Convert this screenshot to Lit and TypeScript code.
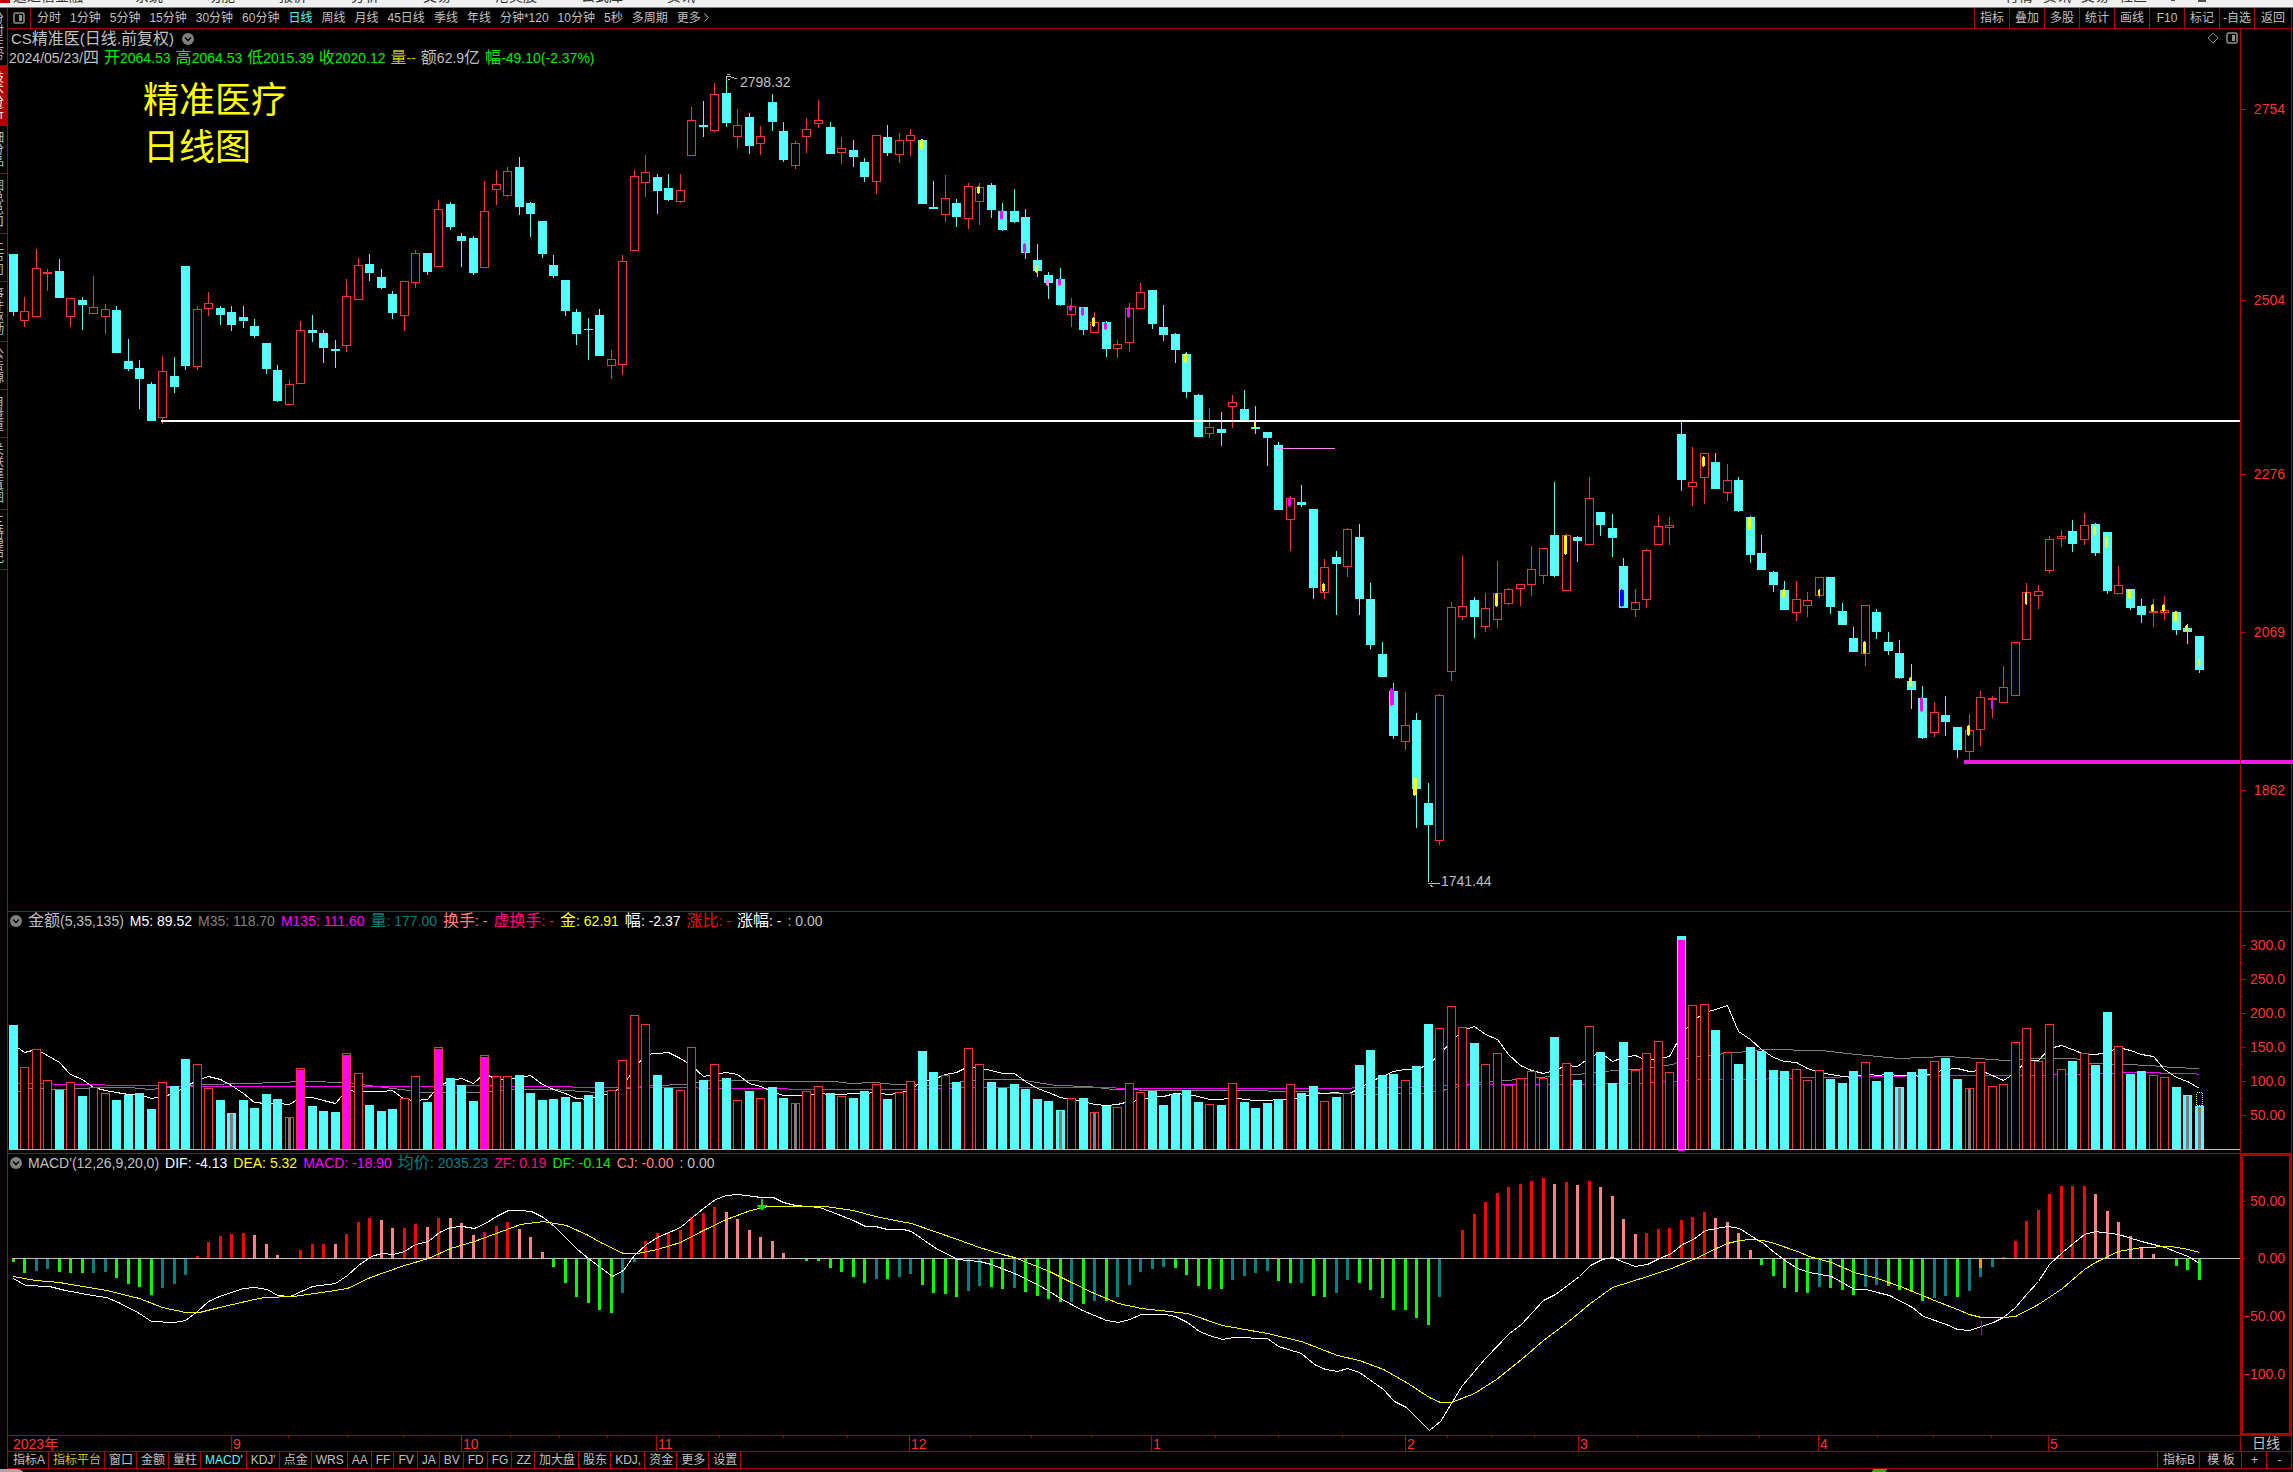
import { LitElement, html, css, svg } from "lit";
import { customElement, property, state } from "lit/decorators.js";
import { classMap } from "lit/directives/class-map.js";

/* ---------- Series data, in canvas units ---------- */

const cx = (i: number) => Math.floor(13.15 + 11.505 * i);

// direction (r = rising, c = falling), high, body top, body bottom, low
const CANDLES = `
c254,254,312,316 r297,311,321,327 r249,268,317,317 r269,272,274,291 c259,271,298,298 r298,298,317,327 c297,300,305,330 r276,307,314,314 r304,309,317,334 c306,310,353,353
c339,361,369,371 c360,368,379,409 c382,384,421,421 r356,371,418,424 c357,376,387,393 c266,266,366,370 r306,309,367,370 r292,303,309,316 c306,308,315,325 c306,312,325,331
c306,317,321,328 c319,326,336,338 c343,343,369,374 c365,370,401,402 r380,384,405,405 r321,330,384,384 c315,330,333,342 c330,333,348,363 c340,349,351,368 r279,296,346,352
r258,265,300,300 c254,264,273,281 c269,277,288,289 c291,294,313,319 r281,281,316,331 r250,253,283,288 c253,253,272,275 r200,209,267,267 c202,204,227,230 c233,236,241,267
c236,238,273,275 r181,211,268,268 r170,184,190,205 r167,171,196,197 c157,167,207,215 c202,203,214,237 c221,221,254,258 c255,265,276,278 c280,280,311,316 c309,312,334,345
c318,329,330,360 c309,315,356,356 r350,359,366,379 r255,261,365,375 r170,176,251,251 r155,172,183,197 c174,177,191,214 c174,188,200,201 r174,190,202,203 r107,120,156,156
c101,125,127,137 r83,94,131,132 c76,93,123,127 r109,125,137,148 c113,117,146,154 r126,136,144,155 c94,102,122,131 c122,131,160,162 r141,143,166,169 r118,129,137,153
r100,120,124,128 c122,127,154,154 r137,148,153,164 c140,150,157,167 c158,162,177,182 r135,135,182,194 c125,137,153,156 r133,140,155,163 r129,135,141,156 c139,140,204,204
c181,207,209,209 r175,198,215,222 c199,203,217,227 r183,186,219,229 r183,187,202,225 c183,185,210,218 c203,211,230,231 c189,211,222,223 c209,217,253,259 c244,260,271,277
c272,275,283,299 c268,279,305,306 r298,306,315,327 c307,307,330,335 r312,322,333,333 c321,322,349,357 r340,344,349,358 r303,308,343,352 r283,292,309,309 c290,290,324,329
c305,327,335,341 c333,334,350,363 c352,354,392,398 c394,395,437,437 r408,427,434,438 c412,429,433,446 r395,402,407,428 c390,409,421,421 c406,427,429,434 c432,432,438,466
c442,445,510,510 r496,498,520,551 c485,502,505,507 c509,509,588,599 r559,567,593,599 c551,557,564,615 r528,529,567,577 c524,537,599,615 c583,599,645,649 c642,654,677,677
c683,691,736,739 r692,725,742,750 c713,720,789,828 c783,803,825,882 r694,695,841,845 r602,607,672,681 r556,606,617,620 c597,600,617,638 r593,608,627,632 r561,593,620,628
r588,589,604,605 r584,584,589,606 r546,569,585,596 r548,548,576,584 c482,535,576,577 r534,535,591,591 c536,537,541,562 r477,498,545,545 c512,512,525,536 c514,528,538,557
c558,566,608,608 r589,602,610,617 r549,550,600,608 r515,526,545,545 r517,525,528,545 c422,434,480,491 r447,482,487,506 r453,453,478,504 c453,462,489,489 r464,480,493,501
c477,480,511,512 c516,517,555,563 c535,553,570,570 c571,572,585,592 c581,590,610,610 r581,599,613,621 r592,600,606,617 r577,577,596,598 c577,577,607,614 c603,611,625,625
c627,638,652,652 r605,605,654,666 c609,612,632,639 c632,642,651,655 c640,653,678,679 c664,681,690,709 c686,698,738,739 r702,712,733,737 c696,715,722,736 c727,727,750,758
r714,730,752,760 r691,697,730,746 r696,698,700,718 r666,687,703,703 r642,642,696,696 r583,592,640,640 r585,591,596,609 r536,539,571,573 r530,536,539,547 c520,531,544,552
r513,525,540,545 c523,524,553,556 c532,532,591,594 r566,585,594,594 c589,589,608,610 c599,606,615,623 r599,611,613,627 r596,610,613,620 c611,612,630,635 c624,628,632,644
c636,636,670,673`
  .trim()
  .split(/\s+/)
  .map((s) => {
    const [h, t, b, l] = s.slice(1).split(",").map(Number);
    return { up: s[0] === "r", h, t, b, l };
  });

// candle index, tone, top, bottom, width
const SIGNALS: [number, string, number, number, number][] = [
  [79, "y", 139, 150, 3], [84, "y", 186, 194, 3], [86, "m", 210, 220, 3], [88, "m", 243, 253, 3],
  [89, "y", 265, 273, 3], [90, "p", 279, 286, 3], [91, "m", 278, 286, 3], [92, "m", 305, 311, 3],
  [93, "m", 307, 316, 3], [94, "y", 317, 327, 3], [95, "m", 322, 330, 3], [97, "m", 307, 318, 3],
  [102, "y", 353, 363, 3], [108, "y", 421, 429, 2], [111, "m", 497, 507, 3], [114, "y", 583, 592, 3],
  [120, "m", 688, 706, 4], [122, "y", 777, 796, 4], [129, "y", 593, 607, 3], [135, "y", 535, 555, 3],
  [140, "b", 589, 607, 4], [147, "y", 456, 467, 3], [151, "y", 517, 530, 3], [154, "y", 589, 598, 3],
  [157, "y", 589, 596, 2], [161, "y", 641, 654, 3], [165, "y", 677, 687, 3], [166, "m", 697, 712, 3],
  [170, "y", 725, 736, 3], [172, "m", 699, 710, 2], [175, "y", 592, 605, 2], [181, "y", 526, 536, 3],
  [182, "y", 536, 548, 3], [184, "y", 589, 599, 3], [186, "y", 604, 612, 3], [187, "y", 604, 612, 3],
  [188, "y", 611, 622, 3], [189, "y", 625, 631, 3], [190, "y", 659, 666, 2],
];

const VOLUME_BASE = 1149;
const VOLUME = [
  1025, 1067, 1049, 1080, 1090, 1082, 1096, 1087, 1093, 1100, 1095, 1093, 1109, 1082, 1086, 1059, 1064, 1088, 1100, 1113,
  1100, 1108, 1094, 1099, 1117, 1068, 1106, 1111, 1112, 1053, 1073, 1105, 1111, 1109, 1098, 1076, 1102, 1047, 1078, 1085,
  1101, 1055, 1076, 1076, 1075, 1093, 1100, 1099, 1097, 1102, 1095, 1082, 1090, 1060, 1015, 1024, 1075, 1088, 1090, 1047,
  1080, 1064, 1078, 1100, 1091, 1098, 1087, 1098, 1103, 1091, 1086, 1093, 1096, 1098, 1091, 1084, 1099, 1092, 1081, 1051,
  1072, 1075, 1082, 1048, 1064, 1082, 1088, 1084, 1089, 1099, 1101, 1110, 1098, 1098, 1112, 1106, 1107, 1083, 1092, 1091,
  1105, 1094, 1090, 1102, 1104, 1105, 1083, 1102, 1108, 1103, 1099, 1084, 1093, 1086, 1101, 1097, 1093, 1065, 1050, 1075,
  1074, 1080, 1066, 1024, 1028, 1006, 1027, 1043, 1064, 1053, 1085, 1078, 1071, 1078, 1037, 1063, 1080, 1026, 1052, 1083,
  1042, 1070, 1053, 1041, 1072, 936, 1005, 1004, 1030, 1052, 1064, 1047, 1051, 1070, 1071, 1069, 1080, 1070, 1079, 1083,
  1071, 1062, 1081, 1072, 1087, 1072, 1069, 1061, 1058, 1079, 1088, 1062, 1086, 1084, 1042, 1028, 1061, 1024, 1069, 1061,
  1053, 1065, 1012, 1046, 1074, 1071, 1075, 1077, 1087, 1095, 1106,
];
const QUIET = new Set([19, 24, 68, 91, 94, 164, 170, 189, 190]);
const SURGE = new Set([25, 29, 37, 41, 145]);

const M5 = VOLUME.map((_, i) =>
  i < 4 ? [1044, 1052, 1049, 1055][i] : Math.round((VOLUME[i] + VOLUME[i - 1] + VOLUME[i - 2] + VOLUME[i - 3] + VOLUME[i - 4]) / 5)
);
const M5_POINTS = M5.map((y, i) => `${cx(i)},${y}`).join(" ");
const M35_POINTS =
  "15,1092 30,1088 65,1089 100,1087 129,1087 149,1089 172,1087 199,1084 249,1083 303,1081 348,1082 368,1085 393,1088 423,1092 478,1092 497,1090 522,1089 552,1089 597,1092 627,1088 652,1085 686,1084 711,1080 736,1080 780,1081 835,1081 850,1083 874,1082 894,1084 942,1085 962,1081 984,1079 1019,1079 1036,1082 1056,1085 1088,1086 1113,1089 1163,1090 1248,1090 1287,1091 1312,1091 1322,1093 1372,1094 1422,1093 1442,1090 1459,1086 1481,1082 1506,1080 1538,1077 1563,1075 1578,1074 1600,1071 1637,1069 1672,1064 1687,1058 1705,1055 1737,1052 1762,1049 1821,1050 1856,1054 1899,1058 1946,1056 1978,1058 2005,1060 2033,1058 2075,1058 2090,1063 2125,1064 2150,1065 2172,1067 2199,1068";
const M135_POINTS =
  "15,1083 90,1084 119,1085 209,1086 438,1086 448,1085 532,1086 612,1087 780,1088 795,1089 909,1089 934,1088 984,1087 1108,1087 1123,1088 1337,1088 1367,1087 1407,1087 1437,1085 1466,1084 1573,1084 1632,1083 1672,1081 1697,1079 1752,1079 1811,1077 1871,1076 1941,1075 2010,1075 2080,1074 2125,1072 2194,1073 2199,1074";

const ZERO = 1258;
// R strengthening, P fading, G weakening, T recovering
const MACD = `
G-4 G-15 T-13 T-11 G-14 G-15 G-15 T-15 T-14 G-20 G-26 G-29 G-37 T-30 T-26 T-17 R2 R16 R22 R24
R25 P23 P14 P3 G-1 R8 R14 R14 P14 R24 R36 R40 P38 P30 R30 R34 P31 R40 P40 P35
P23 R26 R32 R36 P29 P21 P6 G-9 G-25 G-39 G-45 G-52 G-55 T-35 T-4 R17 R25 R26 R28 R41
R45 R51 P46 P39 P28 P21 P17 P5 R0 G-3 G-3 G-10 G-14 G-19 G-25 T-21 G-21 T-19 T-16 G-27
G-35 G-36 G-39 T-33 T-28 G-29 G-31 T-30 G-34 G-38 G-41 G-44 T-44 G-46 T-43 G-43 T-39 T-27 T-14 T-11
T-9 G-10 G-17 G-28 G-31 G-31 T-22 T-18 T-15 T-13 G-23 G-25 T-25 G-38 G-39 T-35 T-22 G-25 G-32 G-40
G-52 G-52 G-60 G-67 T-39 R0 R28 R44 R56 R65 R71 R74 R77 R80 P74 R76 P73 R77 P71 P62
P39 P24 R25 R29 R30 R38 R41 R46 P40 P36 P25 P8 G-7 G-18 G-30 G-34 G-35 T-29 G-30 G-32
G-37 T-29 T-27 G-28 G-32 G-34 G-43 T-40 T-38 G-39 T-33 T-19 T-9 R1 R17 R37 R48 R64 R72 R72
R72 P64 P47 P36 P22 P11 P4 G-1 G-8 G-12 G-22`
  .trim()
  .split(/\s+/)
  .map((s) => ({ tone: s[0], v: Number(s.slice(1)) }));
const DIF_POINTS =
  "13,1278 25,1285 49,1286 65,1290 92,1295 106,1297 118,1302 139,1313 151,1321 174,1322 185,1320 197,1311 208,1301 219,1296 243,1288 254,1287 267,1289 277,1295 290,1296 301,1291 312,1286 335,1283 347,1275 358,1265 371,1256 381,1253 393,1254 404,1251 415,1244 428,1241 439,1232 450,1227 462,1226 474,1228 485,1223 496,1216 508,1210 520,1210 531,1211 543,1217 555,1227 577,1249 588,1258 600,1267 612,1276 623,1270 634,1255 646,1244 657,1237 680,1227 692,1217 703,1208 715,1199 726,1195 737,1194 761,1197 773,1197 783,1202 795,1205 819,1207 830,1211 853,1220 865,1226 875,1226 887,1229 903,1229 911,1231 934,1247 957,1259 979,1261 991,1264 1014,1273 1037,1284 1049,1291 1060,1298 1082,1310 1106,1320 1118,1322 1129,1319 1141,1314 1165,1314 1175,1316 1187,1322 1199,1331 1209,1335 1222,1339 1233,1337 1267,1338 1278,1346 1301,1353 1314,1364 1325,1369 1337,1371 1347,1368 1359,1372 1383,1389 1394,1401 1406,1407 1429,1430 1440,1421 1451,1403 1462,1385 1485,1358 1509,1333 1521,1324 1532,1312 1543,1300 1555,1294 1567,1285 1579,1276 1590,1265 1602,1259 1612,1257 1624,1262 1635,1266 1647,1264 1659,1258 1671,1253 1682,1244 1693,1239 1705,1230 1716,1228 1727,1226 1739,1228 1750,1235 1763,1243 1774,1252 1786,1261 1797,1268 1809,1272 1831,1276 1854,1289 1866,1289 1877,1292 1889,1295 1912,1307 1923,1316 1946,1324 1957,1329 1969,1330 1981,1326 1993,1322 2003,1317 2015,1307 2027,1293 2038,1281 2049,1264 2062,1252 2073,1243 2084,1234 2095,1231 2118,1234 2141,1241 2165,1247 2177,1252 2188,1256 2199,1263";
const DEA_POINTS =
  "13,1276 35,1280 59,1282 106,1290 139,1298 162,1307 185,1312 199,1312 219,1307 254,1299 264,1297 293,1296 335,1290 347,1288 370,1277 404,1265 428,1258 450,1248 474,1241 520,1224 543,1221 566,1225 588,1235 600,1242 623,1253 637,1253 657,1249 680,1242 703,1230 726,1219 750,1210 768,1206 825,1206 853,1210 875,1216 900,1221 911,1223 934,1231 957,1239 979,1247 1002,1254 1014,1257 1049,1271 1071,1282 1094,1293 1118,1303 1141,1308 1187,1313 1222,1325 1267,1333 1301,1341 1337,1355 1359,1360 1383,1369 1406,1382 1429,1397 1440,1402 1451,1402 1474,1393 1496,1379 1521,1359 1543,1340 1567,1322 1590,1303 1612,1287 1647,1276 1671,1268 1693,1259 1716,1248 1727,1243 1739,1240 1750,1239 1763,1240 1774,1243 1797,1251 1809,1256 1831,1262 1854,1272 1877,1278 1900,1286 1934,1300 1957,1309 1969,1314 1981,1317 2003,1317 2015,1316 2038,1304 2062,1288 2084,1269 2095,1262 2118,1251 2141,1247 2170,1246 2188,1249 2199,1252";

/* ---------- Labels ---------- */

const PERIODS = ["分时", "1分钟", "5分钟", "15分钟", "30分钟", "60分钟", "日线", "周线", "月线", "45日线", "季线", "年线", "分钟*120", "10分钟", "5秒", "多周期", "更多"];
const TOOLS = ["指标", "叠加", "多股", "统计", "画线", "F10", "标记", "-自选", "返回"];
const TABS = ["指标A", "指标平台", "窗口", "金额", "量柱", "MACD'", "KDJ'", "点金", "WRS", "AA", "FF", "FV", "JA", "BV", "FD", "FG", "ZZ", "加大盘", "股东", "KDJ,", "资金", "更多", "设置"];
const SIDE: [string, number][] = [["分时走势", 58], ["技术分析", 60], ["细分品", 48], ["图总总口", 60], ["上市司", 48], ["事件驱动", 60], ["公告源", 48], ["自量重", 48], ["关联靠真图", 72], ["三特提记", 60]];
const MONTHS: [string, number][] = [["2023年", 223], ["9", 230], ["10", 195], ["11", 253], ["12", 242], ["1", 254], ["2", 173], ["3", 240], ["4", 230], ["5", 192]];
const MONTH_COLUMNS = MONTHS.map(([, w]) => `minmax(0,${w}fr)`).join(" ");
const TICKS = [288, 347, 403, 510, 559, 607, 719, 783, 847, 970, 1031, 1091, 1215, 1278, 1342, 1447, 1491, 1534, 1637, 1698, 1759, 1877, 1933, 1991];

type Part = [string, string];
const QUOTE: Part[] = [["2024/05/23/四", "silver"], ["开2064.53", "green"], ["高2064.53", "green"], ["低2015.39", "green"], ["收2020.12", "green"], ["量--", "gold"], ["额62.9亿", "silver"], ["幅-49.10(-2.37%)", "green"]];
const VOL_HEAD: Part[] = [["金额(5,35,135)", "silver"], ["M5: 89.52", "white"], ["M35: 118.70", "gray"], ["M135: 111.60", "magenta"], ["量: 177.00", "teal"], ["换手: -", "salmon"], ["虚换手: -", "rose"], ["金: 62.91", "yellow"], ["幅: -2.37", "white"], ["涨比: -", "red"], ["涨幅: -", "white"], [": 0.00", "silver"]];
const MACD_HEAD: Part[] = [["MACD'(12,26,9,20,0)", "silver"], ["DIF: -4.13", "white"], ["DEA: 5.32", "yellow"], ["MACD: -18.90", "magenta"], ["均价: 2035.23", "teal"], ["ZF: 0.19", "rose"], ["DF: -0.14", "green"], ["CJ: -0.00", "salmon"], [": 0.00", "silver"]];

// Chinese runs are set one step larger than the Latin text around them.
const mixed = (text: string) =>
  (text.match(/[\u4e00-\u9fff]+|[^\u4e00-\u9fff]+/g) ?? []).map((run) =>
    /[\u4e00-\u9fff]/.test(run) ? html`<span class="han">${run}</span>` : run
  );

const tones = css`
  .silver { color: #c0c0c0; }
  .white { color: #fff; }
  .gray { color: #808080; }
  .green { color: #0e0; }
  .gold { color: #c8c800; }
  .yellow { color: #ff0; }
  .magenta { color: #f0f; }
  .teal { color: #008080; }
  .salmon { color: #ff8080; }
  .rose { color: #ff0080; }
  .red { color: #f00; }
`;

/* ---------- Value scale at the right of a pane ---------- */

@customElement("value-scale")
export class ValueScale extends LitElement {
  @property({ attribute: false }) marks: [string, number][] = [];
  @property({ attribute: false }) minor: number[] = [];
  @property({ type: Number }) top = 0;
  @property({ type: Number }) extent = 1;

  static styles = css`
    :host { display: block; position: relative; }
    .mark {
      position: absolute; left: 0; right: 6px; height: 16px; margin-top: -8px;
      font: 14px/16px "Liberation Sans", sans-serif; color: #ff3232; text-align: right;
    }
    .mark::before { content: ""; position: absolute; left: 0; top: 8px; width: 5px; height: 1px; background: #b00000; }
    .minor { position: absolute; left: 0; width: 2px; height: 1px; background: #b00000; }
  `;

  private at(y: number) {
    return `top:${((y - this.top) / this.extent) * 100}%`;
  }

  render() {
    return html`
      ${this.minor.map((y) => html`<i class="minor" style=${this.at(y)}></i>`)}
      ${this.marks.map(([label, y]) => html`<div class="mark" style=${this.at(y)}>${label}</div>`)}
    `;
  }
}

/* ---------- Legend line over a pane ---------- */

@customElement("legend-line")
export class LegendLine extends LitElement {
  @property({ attribute: false }) parts: Part[] = [];
  @property({ type: Boolean }) toggle = false;

  static styles = [
    tones,
    css`
      :host { display: flex; align-items: center; gap: 5px; height: 18px; font: 14px/18px "Liberation Sans", "Noto Sans CJK SC", sans-serif; white-space: nowrap; }
      :host([toggle]) { gap: 6px; }
      .han { font-size: 16px; }
      .fold { display: block; padding: 0; border: 0; background: none; width: 12px; height: 12px; }
      .fold svg { display: block; }
    `,
  ];

  render() {
    return html`
      ${this.toggle ? html`<button class="fold" aria-label="展开">${foldIcon}</button>` : ""}
      ${this.parts.map(([text, tone]) => html`<span class=${tone}>${mixed(text)}</span>`)}
    `;
  }
}

const foldIcon = html`<svg width="12" height="12" viewBox="0 0 12 12"><circle cx="6" cy="6" r="6" fill="#808080" /><path d="M3 4.5 6 7.5 9 4.5" fill="none" stroke="#000" stroke-width="1.4" /></svg>`;

/* ---------- Page ---------- */

@customElement("app-root")
export class AppRoot extends LitElement {
  @state() private period = "日线";
  @state() private tab = "MACD'";

  static styles = [
    tones,
    css`
      :host {
        display: grid; grid-template-rows: 8px minmax(0, 1fr) 3px; height: 100vh; overflow: hidden; background: #000;
        font: 12px/16px "Liberation Sans", "Noto Sans CJK SC", sans-serif; color: #c0c0c0; --line: #b00000;
      }
      button { font: inherit; color: inherit; background: none; border: 0; padding: 0; margin: 0; white-space: nowrap; }

      .menu { display: flex; align-items: flex-end; background: #f0f0f0; border-bottom: 1px solid #808080; overflow: hidden; font-size: 14px; line-height: 22px; color: #303030; box-sizing: border-box; }
      .logo { align-self: flex-start; width: 10px; height: 3px; background: #c00000; margin-right: 3px; }
      .menu nav { display: flex; gap: 44px; }
      .menu .product { margin-right: 52px; }
      .menu .right { margin-left: auto; gap: 10px; }
      .menu .dots { align-self: flex-start; display: flex; gap: 23px; margin: 0 87px 0 24px; }
      .dots i { width: 4px; height: 1px; background: #505050; }
      .dots i:last-child { width: 8px; height: 2px; }

      .work { display: grid; grid-template-columns: 7px minmax(0, 1fr); }
      .side { overflow: hidden; }
      .side button { display: flex; justify-content: flex-end; align-items: center; width: 7px; box-sizing: border-box; border-bottom: 1px solid var(--line); padding-right: 3px; line-height: 12px; white-space: pre; }
      .side .on { background: #b00000; color: #fff; }

      .main {
        display: grid; grid-template-rows: 21px minmax(0, 883fr) minmax(0, 242fr) minmax(0, 282fr) 16px 17px;
        border-left: 1px solid var(--line); border-right: 1px solid var(--line); margin-right: 1px;
      }
      .bar { display: flex; align-items: stretch; border-bottom: 1px solid var(--line); }
      .dock { display: flex; align-items: center; width: 23px; border-right: 1px solid var(--line); padding-left: 5px; box-sizing: border-box; }
      .periods { display: flex; align-items: center; gap: 9px; padding-left: 6px; }
      .periods .on { color: #54fcfc; }
      .tools { display: flex; margin-left: auto; }
      .tools button { width: 35px; border-left: 1px solid var(--line); }
      .tools button:last-child { width: 37px; }

      .pane { display: grid; grid-template-columns: minmax(0, 1fr) 51px; border-bottom: 1px solid var(--line); position: relative; }
      .plot { position: relative; min-height: 0; }
      .canvas { position: absolute; inset: 0; width: 100%; height: 100%; display: block; overflow: visible; }
      .scale { border-left: 1px solid var(--line); }
      .scale.active { box-shadow: inset 1px 1px 0 1px var(--line), inset -1px -1px 0 1px var(--line); }
      .legend { position: absolute; left: 2px; top: 0; }
      .legend.price { left: 1px; top: 20px; }
      .title { position: absolute; left: 3px; top: 1px; display: flex; align-items: center; gap: 8px; font-size: 15px; line-height: 18px; }
      .title .han { font-size: 16px; }
      .note { position: absolute; left: 135px; top: 48px; margin: 0; font-size: 36px; line-height: 47px; color: #ff0; white-space: pre; }
      .corner { position: absolute; right: 2px; top: 3px; display: flex; align-items: center; gap: 7px; }
      .peak { position: absolute; font-size: 14px; line-height: 16px; }

      .months { display: grid; grid-template-columns: minmax(0, 1fr) 51px; border-bottom: 1px solid var(--line); }
      .timeline { display: grid; position: relative; font-size: 14px; line-height: 16px; color: #ff3232; }
      .timeline span { box-sizing: border-box; padding-left: 1px; border-left: 1px solid var(--line); min-width: 0; }
      .timeline span:first-child { border: 0; padding-left: 5px; }
      .timeline svg { position: absolute; inset: 0; width: 100%; height: 100%; }
      .current { border-left: 1px solid var(--line); text-align: center; font-size: 14px; line-height: 15px; overflow: hidden; }

      .tabs { display: flex; border-bottom: 1px solid var(--line); padding-left: 1px; }
      .tabs button { padding: 0 3px 0 4px; border-right: 1px solid var(--line); line-height: 16px; }
      .tabs .on { color: #54fcfc; }
      .tabs .pick { color: #c8c800; }
      .tabs .end { margin-left: auto; border-left: 1px solid var(--line); width: 43px; }
      .tabs .tpl { width: 41px; border-right: 0; }
      .tabs .zoom { width: 25px; border-right: 0; border-left: 1px solid var(--line); }

      .foot { position: relative; overflow: hidden; }
      .blob { position: absolute; left: 0; top: 0; width: 25px; height: 8px; background: #a8a8a8; border-radius: 0 12px 0 0; }
      .leaf { position: absolute; left: 82%; top: 0; width: 14px; height: 8px; margin-left: -9px; background: #2fae1c; transform: skewX(-30deg); }
    `,
  ];

  private priceCanvas() {
    const fill: Record<string, string> = { y: "#ff0", m: "#f0f", p: "#ff80ff", b: "#00f" };
    return svg`
      ${CANDLES.map((k, i) => {
        const x = cx(i);
        const c = k.up ? "#ff3232" : "#54fcfc";
        return svg`
          ${k.t > k.h ? svg`<rect x=${x} y=${k.h} width="1" height=${k.t - k.h} fill=${c} />` : ""}
          ${k.l > k.b ? svg`<rect x=${x} y=${k.b} width="1" height=${k.l - k.b} fill=${c} />` : ""}
          ${k.up
            ? svg`<rect x=${x - 3.5} y=${k.t + 0.5} width="8" height=${k.b - k.t - 1} fill="none" stroke=${c} />`
            : svg`<rect x=${x - 4} y=${k.t} width="9" height=${k.b - k.t} fill=${c} />`}`;
      })}
      ${SIGNALS.map(([i, tone, t, b, w]) => {
        const x = cx(i) + 1 - w;
        return svg`<rect x=${x} y=${t + 1} width=${w} height=${b - t - 2} fill=${fill[tone]} /><rect x=${x + 1} y=${t} width="1" height=${b - t} fill=${fill[tone]} />`;
      })}
      <rect x="161" y="420" width="2079" height="2" fill="#fff" />
      <rect x="1277" y="448" width="58" height="1" fill="#ff80ff" />
      <rect x="1964" y="760" width="329" height="4" fill="#f01ae8" />
      <path d="M726.5 76V79M727 74.5H730M727 76.5H731M731 77.5H734M734 78.5H737M728 79.5H730" stroke="#c0c0c0" fill="none" />
      <path d="M1429 883.5H1440M1428 883.5H1431M1431 881.5H1432M1430 885.5H1432M1431 886.5H1433" stroke="#c0c0c0" fill="none" />`;
  }

  private volumeCanvas() {
    return svg`
      <polyline points=${M35_POINTS} fill="none" stroke="#808080" transform="translate(.5 .5)" />
      <polyline points=${M135_POINTS} fill="none" stroke="#f0f" transform="translate(.5 .5)" />
      <polyline points=${M5_POINTS} fill="none" stroke="#fff" transform="translate(.5 .5)" />
      ${VOLUME.map((y, i) => {
        const x = cx(i);
        const h = VOLUME_BASE - y;
        const body = CANDLES[i].up
          ? svg`<rect x=${x - 3.5} y=${y + 0.5} width="8" height=${h} fill="#000" stroke="#ff3232" />`
          : svg`<rect x=${x - 4} y=${y} width="9" height=${h} fill="#54fcfc" />`;
        return svg`${body}
          ${SURGE.has(i) ? svg`<rect x=${x - 3} y=${y + (i === 145 ? 4 : 2)} width="7" height=${h - 2} fill="#f0f" />` : ""}
          ${QUIET.has(i) ? svg`<rect x=${x - 1} y=${y + 1} width="3" height=${h - 1} fill="#808080" />` : ""}`;
      })}
      <rect x="2196.5" y="1092.5" width="6" height="13" fill="none" stroke="#ff0" stroke-dasharray="1 1" />
      <rect x="9" y="1149" width="2231" height="1" fill="#c0c0c0" />`;
  }

  private macdCanvas() {
    const fill: Record<string, string> = { R: "#f00", P: "#ff8080", G: "#0f0", T: "#008080" };
    return svg`
      ${MACD.map(({ tone, v }, i) =>
        v ? svg`<rect x=${cx(i) - 1} y=${v > 0 ? ZERO - v : ZERO} width="3" height=${Math.abs(v)} fill=${fill[tone]} />` : ""
      )}
      <rect x="1979" y="1259" width="3" height="9" fill="#e8a000" />
      <rect x="12" y="1258" width="2228" height="1" fill="#c0c0c0" />
      <polyline points=${DIF_POINTS} fill="none" stroke="#fff" transform="translate(.5 .5)" />
      <polyline points=${DEA_POINTS} fill="none" stroke="#ff0" transform="translate(.5 .5)" />
      <path d="M761 1199H763V1205H767L762 1211L757 1205H761Z" fill="#0d0" />
      <rect x="1981" y="1321" width="1" height="14" fill="#f00" />`;
  }

  render() {
    return html`
      <header class="menu">
        <i class="logo"></i><span class="product">通达信金融</span>
        <nav><span>系统</span><span>功能</span><span>报价</span><span>分析</span><span>交易</span><span>港美股</span><span>公式库</span><span>资讯</span></nav>
        <nav class="right"><span>行情</span><span>资讯</span><span>交易</span><span>社区</span></nav>
        <div class="dots"><i></i><i></i></div>
      </header>
      <div class="work">
        <nav class="side">
          ${SIDE.map(([label, h]) => html`<button class=${classMap({ on: label === "技术分析" })} style="height:${h}px">${label.split("").join("\n")}</button>`)}
        </nav>
        <main class="main">
          <div class="bar">
            <button class="dock" aria-label="侧栏"><svg width="12" height="12" viewBox="0 0 12 12"><rect x="1" y="1" width="10" height="10" rx="1.5" fill="none" stroke="#909090" stroke-width="1.5" /><rect x="6" y="3" width="3" height="6" fill="#909090" /></svg></button>
            <div class="periods">
              ${PERIODS.map((p) => html`<button class=${classMap({ on: p === this.period })} @click=${() => (this.period = p)}>${p}${p === "更多" ? html` <svg width="5" height="9" viewBox="0 0 5 9"><path d="M.5.5 4 4.5.5 8.5" fill="none" stroke="#c0c0c0" /></svg>` : ""}</button>`)}
            </div>
            <div class="tools">${TOOLS.map((t) => html`<button>${t}</button>`)}</div>
          </div>

          <section class="pane">
            <div class="plot">
              <svg class="canvas" viewBox="8 29 2232 882" preserveAspectRatio="none" shape-rendering="crispEdges">${this.priceCanvas()}</svg>
              <div class="title"><span>${mixed("CS精准医(日线.前复权)")}</span>${foldIcon}</div>
              <legend-line class="legend price" .parts=${QUOTE}></legend-line>
              <p class="note">精准医疗
日线图</p>
              <span class="peak" style="left:${(732 / 2232) * 100}%;top:${(45 / 882) * 100}%">2798.32</span>
              <span class="peak" style="left:${(1433 / 2232) * 100}%;top:${(844 / 882) * 100}%">1741.44</span>
              <div class="corner">
                <svg width="12" height="12" viewBox="0 0 12 12"><path d="M6 1 11 6 6 11 1 6Z" fill="none" stroke="#808080" /></svg>
                <svg width="12" height="12" viewBox="0 0 12 12"><rect x="1" y="1" width="10" height="10" rx="1.5" fill="none" stroke="#909090" stroke-width="1.5" /><rect x="6" y="3" width="3" height="6" fill="#909090" /></svg>
              </div>
            </div>
            <value-scale class="scale" .top=${29} .extent=${882} .marks=${[["2754", 109], ["2504", 300], ["2276", 474], ["2069", 632], ["1862", 790]]}></value-scale>
          </section>

          <section class="pane">
            <div class="plot">
              <svg class="canvas" viewBox="8 912 2232 241" preserveAspectRatio="none" shape-rendering="crispEdges">${this.volumeCanvas()}</svg>
              <legend-line class="legend" toggle .parts=${VOL_HEAD}></legend-line>
            </div>
            <value-scale class="scale" .top=${912} .extent=${241} .marks=${[["300.0", 945], ["250.0", 979], ["200.0", 1013], ["150.0", 1047], ["100.0", 1081], ["50.00", 1115]]} .minor=${[962, 996, 1030, 1064, 1098, 1132]}></value-scale>
          </section>

          <section class="pane">
            <div class="plot">
              <svg class="canvas" viewBox="8 1154 2232 281" preserveAspectRatio="none" shape-rendering="crispEdges">${this.macdCanvas()}</svg>
              <legend-line class="legend" toggle .parts=${MACD_HEAD}></legend-line>
            </div>
            <value-scale class="scale active" .top=${1154} .extent=${281} .marks=${[["50.00", 1201], ["0.00", 1258], ["-50.00", 1316], ["-100.0", 1374]]} .minor=${[1229, 1287, 1345]}></value-scale>
          </section>

          <div class="months">
            <div class="timeline" style="grid-template-columns:${MONTH_COLUMNS}">
              ${MONTHS.map(([m]) => html`<span>${m}</span>`)}
              <svg viewBox="8 1436 2232 15" preserveAspectRatio="none" shape-rendering="crispEdges">${TICKS.map((x) => svg`<rect x=${x} y="1436" width="1" height="2" fill="#b00000" />`)}</svg>
            </div>
            <span class="current">日线</span>
          </div>

          <footer class="tabs">
            ${TABS.map((t) => html`<button class=${classMap({ on: t === this.tab, pick: t === "指标平台" })} @click=${() => (this.tab = t)}>${t}</button>`)}
            <button class="end">指标B</button><button class="tpl">模 板</button><button class="zoom">+</button><button class="zoom">-</button>
          </footer>
        </main>
      </div>
      <div class="foot"><i class="blob"></i><i class="leaf"></i></div>
    `;
  }
}
